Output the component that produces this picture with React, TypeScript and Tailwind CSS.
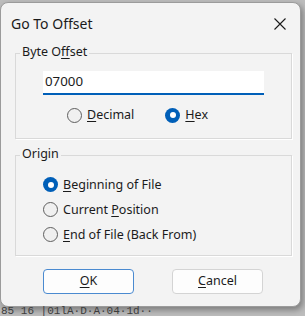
import React from "react";

const font = { fontFamily: '"Noto Sans", "Open Sans", sans-serif' };

function Radio({ checked }: { checked?: boolean }) {
  return checked ? (
    <span className="flex h-[15px] w-[15px] shrink-0 items-center justify-center rounded-full bg-[#005fb8]">
      <span className="h-[6px] w-[6px] rounded-full bg-white" />
    </span>
  ) : (
    <span className="h-[15px] w-[15px] shrink-0 rounded-full border border-[#5f5f5f] bg-[#f0f0f0]" />
  );
}

function U({ children }: { children: React.ReactNode }) {
  return <span className="underline decoration-1 underline-offset-[2px]">{children}</span>;
}

export default function App() {
  return (
    <div className="relative h-[316px] w-[305px] overflow-hidden bg-[#bdbdbd]" style={font}>
      <div className="flex h-[316px] flex-col">
        <div className="mt-[2px] flex h-[305px] w-[301px] shrink-0 flex-col rounded-[8px] border border-[#9b9b9b] bg-[#f3f3f3] text-[12.5px] text-[#1b1b1b] shadow-[2px_3px_6px_rgba(0,0,0,0.35)]">
          {/* title bar */}
          <div className="flex h-[41px] items-center justify-between pl-[10px] pr-[14px]">
            <span className="text-[14px] leading-[16px] text-[#1a1a1a]">Go To Offset</span>
            <svg width="12" height="12" viewBox="0 0 12 12" className="mt-[1px]">
              <path d="M0.5 0.5 L11.5 11.5 M11.5 0.5 L0.5 11.5" stroke="#1a1a1a" strokeWidth="1.1" fill="none" />
            </svg>
          </div>

          {/* Byte Offset group */}
          <div className="relative ml-[14px] mt-[9px] h-[86px] w-[277px] border border-[#d9d9d9] shadow-[1px_1px_0_#ffffff]">
            <span className="absolute left-[4px] top-[-10px] bg-[#f3f3f3] px-[2px] leading-[16px]">
              Byte O<U>f</U>fset
            </span>
            <div className="ml-[27px] mt-[17px] flex h-[24px] w-[221px] items-center border-b-2 border-[#005fb8] bg-white pl-[2px] text-[13.3px]">
              07000
            </div>
            <div className="mt-[12px] flex items-center">
              <div className="ml-[51px] flex items-center gap-[5px]">
                <Radio />
                <span className="leading-[16px]">
                  <U>D</U>ecimal
                </span>
              </div>
              <div className="ml-[31px] flex items-center gap-[5px]">
                <Radio checked />
                <span className="leading-[16px]">
                  <U>H</U>ex
                </span>
              </div>
            </div>
          </div>

          {/* Origin group */}
          <div className="relative ml-[14px] mt-[16px] h-[101px] w-[277px] border border-[#d9d9d9] shadow-[1px_1px_0_#ffffff]">
            <span className="absolute left-[4px] top-[-10px] bg-[#f3f3f3] px-[2px] leading-[16px]">Origin</span>
            <div className="ml-[27px] mt-[21px] flex flex-col gap-[10px]">
              <div className="flex h-[15px] items-center gap-[5px]">
                <Radio checked />
                <span className="leading-[16px]">
                  <U>B</U>eginning of File
                </span>
              </div>
              <div className="flex h-[15px] items-center gap-[5px]">
                <Radio />
                <span className="leading-[16px]">
                  Current <U>P</U>osition
                </span>
              </div>
              <div className="flex h-[15px] items-center gap-[5px]">
                <Radio />
                <span className="leading-[16px]">
                  <U>E</U>nd of File (Back From)
                </span>
              </div>
            </div>
          </div>

          {/* buttons */}
          <div className="ml-[42px] mt-[13px] flex gap-[38px]">
            <button className="flex h-[25px] w-[91px] items-center justify-center rounded-[4px] border border-[#4a8ad0] bg-[#fdfdfd] text-[12.5px] leading-none">
              <U>O</U>K
            </button>
            <button className="flex h-[25px] w-[91px] items-center justify-center rounded-[4px] border border-[#d4d4d4] bg-[#fdfdfd] text-[12.5px] leading-none">
              <U>C</U>ancel
            </button>
          </div>
        </div>
        <div
          className="mt-[-1px] whitespace-pre pl-[1px] text-[11px] leading-[10px] text-[#3c3c3c]"
          style={{ fontFamily: '"Liberation Mono", monospace' }}
        >
          85 16 |01lA·D·A·04·1d··
        </div>
      </div>
    </div>
  );
}
